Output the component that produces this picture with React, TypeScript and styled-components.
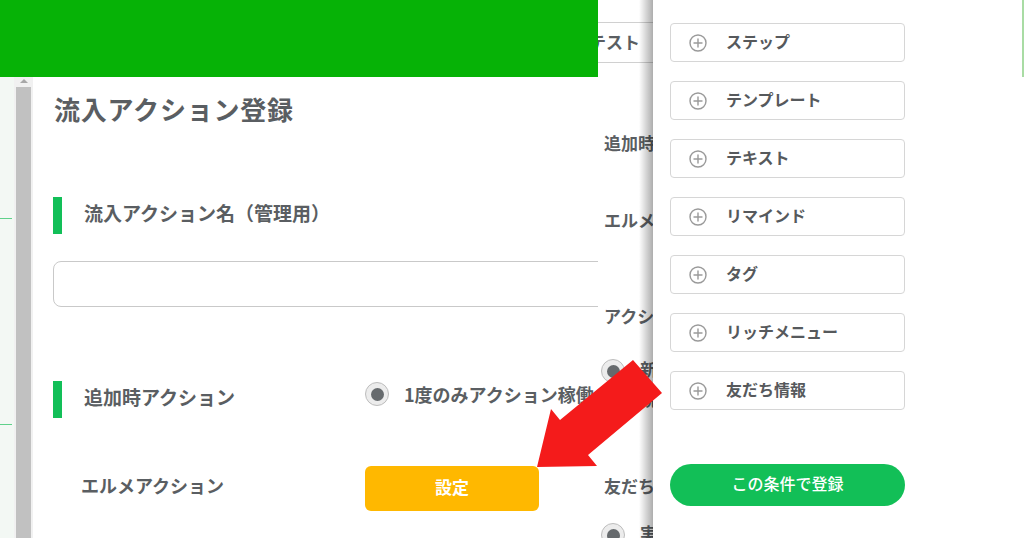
import styled, { createGlobalStyle } from 'styled-components';

const GlobalStyle = createGlobalStyle`
  html, body {
    margin: 0;
    padding: 0;
    background: #ffffff;
  }
  body {
    font-family: 'Noto Sans CJK JP', 'Noto Sans', sans-serif;
    color: #5a5e62;
  }
  * {
    box-sizing: border-box;
  }
`;

const Page = styled.div`
  position: relative;
  display: flex;
  width: 1024px;
  height: 538px;
  overflow: hidden;
  background: #ffffff;
`;

/* left screen */
const LeftPanel = styled.section`
  width: 598px;
  flex: none;
  display: flex;
  flex-direction: column;
  overflow: hidden;
`;

const Header = styled.header`
  height: 77px;
  flex: none;
  background: #06b206;
`;

const Body = styled.div`
  display: flex;
  flex: 1;
  min-height: 0;
`;

const Strip = styled.div`
  width: 14px;
  flex: none;
  display: flex;
  flex-direction: column;
  background: #f3f8f4;
`;

const StripTick = styled.div<{ $gap: number }>`
  margin-top: ${(p) => p.$gap}px;
  width: 12px;
  height: 1px;
  background: #5fd18a;
`;

const Scrollbar = styled.div`
  width: 19px;
  flex: none;
  display: flex;
  flex-direction: column;
  align-items: center;
  padding-top: 2px;
  background: #f1f1f1;
`;

const ScrollArrow = styled.div`
  width: 0;
  height: 0;
  border-left: 4px solid transparent;
  border-right: 4px solid transparent;
  border-bottom: 4px solid #a8a8a8;
`;

const ScrollThumb = styled.div`
  margin-top: 4px;
  width: 15px;
  flex: 1;
  background: #c1c1c1;
`;

const Content = styled.div`
  flex: 1;
  display: flex;
  flex-direction: column;
  padding: 15px 0 0 20px;
  min-width: 0;
`;

const Title = styled.h1`
  margin: 0 0 0 1px;
  font-size: 26px;
  line-height: 34px;
  font-weight: 700;
  letter-spacing: 0.8px;
  color: #5a5e62;
`;

const SectionHead = styled.div<{ $mt: number }>`
  margin-top: ${(p) => p.$mt}px;
  display: flex;
  align-items: center;
  height: 37px;
`;

const Bar = styled.span`
  width: 9px;
  height: 37px;
  flex: none;
  background: #12bf58;
`;

const SectionLabel = styled.h2`
  margin: 0 0 6px 22px;
  width: 281px;
  flex: none;
  font-size: 19px;
  line-height: 1;
  font-weight: 700;
  white-space: nowrap;
  color: #5a5e62;
`;

const RadioOption = styled.label`
  align-self: flex-start;
  margin-top: 1px;
  display: flex;
  align-items: center;
  gap: 15px;
  font-size: 18px;
  line-height: 1;
  font-weight: 700;
  white-space: nowrap;
`;

const Radio = styled.span`
  width: 24px;
  height: 24px;
  flex: none;
  display: flex;
  align-items: center;
  justify-content: center;
  border-radius: 50%;
  border: 1px solid #bdbdbd;
  background: #ececec;

  &::after {
    content: '';
    width: 13px;
    height: 13px;
    border-radius: 50%;
    background: #666a6d;
  }
`;

const NameInput = styled.input`
  margin-top: 27px;
  width: 600px;
  height: 46px;
  flex: none;
  border: 1px solid #c9c9c9;
  border-radius: 8px;
  background: #ffffff;
  outline: none;
`;

const FieldRow = styled.div`
  margin-top: 48px;
  display: flex;
  align-items: center;
  height: 45px;
`;

const FieldLabel = styled.span`
  width: 312px;
  flex: none;
  padding: 0 0 8px 28px;
  font-size: 18px;
  line-height: 1;
  font-weight: 700;
  white-space: nowrap;
`;

const SetButton = styled.button`
  width: 174px;
  height: 45px;
  padding: 0 0 4px;
  border: none;
  border-radius: 6px;
  background: #ffb800;
  color: #ffffff;
  font-family: inherit;
  font-size: 17px;
  font-weight: 700;
`;

/* middle screen, mostly hidden */
const MiddlePanel = styled.section`
  position: relative;
  width: 55px;
  flex: none;
  overflow: hidden;

  &::after {
    content: '';
    position: absolute;
    top: 0;
    right: 0;
    bottom: 0;
    width: 14px;
    background: linear-gradient(to right, rgba(0, 0, 0, 0), rgba(0, 0, 0, 0.32));
  }
`;

const MiddleInner = styled.div`
  margin-left: -9px;
  width: 220px;
  display: flex;
  flex-direction: column;
`;

const TestRow = styled.div`
  margin-top: 22px;
  height: 41px;
  display: flex;
  align-items: center;
  padding-bottom: 2px;
  border-top: 1px solid #d0d0d0;
  border-bottom: 1px solid #d0d0d0;
  font-size: 17px;
  font-weight: 700;
`;

const MiddleLabel = styled.div<{ $mt: number }>`
  margin-top: ${(p) => p.$mt}px;
  padding-left: 15px;
  font-size: 17px;
  line-height: 24px;
  font-weight: 700;
  white-space: nowrap;
`;

const MiddleOption = styled.div<{ $mt: number; $h: number }>`
  margin-top: ${(p) => p.$mt}px;
  height: ${(p) => p.$h}px;
  padding-left: 12px;
  display: flex;
  align-items: flex-start;
  gap: 15px;
  font-size: 17px;
  line-height: 30px;
  font-weight: 700;
`;

const WrapText = styled.span`
  width: 20px;
  margin-top: -5px;
`;

/* right screen */
const RightPanel = styled.section`
  flex: 1;
  display: flex;
  padding: 23px 0 0 17px;
`;

const Menu = styled.div`
  width: 235px;
  display: flex;
  flex-direction: column;
  gap: 19px;
`;

const MenuButton = styled.button`
  height: 39px;
  display: flex;
  align-items: center;
  gap: 19px;
  padding: 0 0 0 18px;
  border: 1px solid #d6d6d6;
  border-radius: 4px;
  background: #ffffff;
  color: #56595c;
  font-family: inherit;
  font-size: 16px;
  line-height: 1;
  font-weight: 700;
`;

const MenuText = styled.span`
  padding-bottom: 4px;
`;

const SubmitButton = styled.button`
  margin-top: 35px;
  height: 42px;
  padding: 0 0 4px;
  border: none;
  border-radius: 21px;
  background: #12bf57;
  color: #ffffff;
  font-family: inherit;
  font-size: 16px;
  font-weight: 500;
`;

const EdgeLine = styled.div`
  margin: -23px 0 0 auto;
  width: 2px;
  height: 77px;
  background: #a9dca4;
`;

const ArrowLayer = styled.svg`
  position: absolute;
  inset: 0;
  pointer-events: none;
`;

const PlusCircle = () => (
  <svg width='18' height='18' viewBox='0 0 18 18' fill='none'>
    <circle cx='9' cy='9' r='8' stroke='#9a9a9a' strokeWidth='1.4' />
    <path d='M9 5v8M5 9h8' stroke='#9a9a9a' strokeWidth='1.4' strokeLinecap='round' />
  </svg>
);

const menuItems = ['ステップ', 'テンプレート', 'テキスト', 'リマインド', 'タグ', 'リッチメニュー', '友だち情報'];

export default function App() {
  return (
    <Page>
      <GlobalStyle />
      <LeftPanel>
        <Header />
        <Body>
          <Strip>
            <StripTick $gap={141} />
            <StripTick $gap={205} />
          </Strip>
          <Scrollbar>
            <ScrollArrow />
            <ScrollThumb />
          </Scrollbar>
          <Content>
            <Title>流入アクション登録</Title>
            <SectionHead $mt={71}>
              <Bar />
              <SectionLabel>流入アクション名（管理用）</SectionLabel>
            </SectionHead>
            <NameInput type='text' />
            <SectionHead $mt={74}>
              <Bar />
              <SectionLabel>追加時アクション</SectionLabel>
              <RadioOption>
                <Radio />
                1度のみアクション稼働
              </RadioOption>
            </SectionHead>
            <FieldRow>
              <FieldLabel>エルメアクション</FieldLabel>
              <SetButton type='button'>設定</SetButton>
            </FieldRow>
          </Content>
        </Body>
      </LeftPanel>

      <MiddlePanel>
        <MiddleInner>
          <TestRow>テスト</TestRow>
          <MiddleLabel $mt={68}>追加時アクション</MiddleLabel>
          <MiddleLabel $mt={53}>エルメアクション</MiddleLabel>
          <MiddleLabel $mt={72}>アクション</MiddleLabel>
          <MiddleOption $mt={31} $h={60}>
            <Radio />
            <WrapText>新規</WrapText>
          </MiddleOption>
          <MiddleLabel $mt={55}>友だち</MiddleLabel>
          <MiddleOption $mt={25} $h={30}>
            <Radio />
            <WrapText>実</WrapText>
          </MiddleOption>
        </MiddleInner>
      </MiddlePanel>

      <RightPanel>
        <Menu>
          {menuItems.map((item) => (
            <MenuButton key={item} type='button'>
              <PlusCircle />
              <MenuText>{item}</MenuText>
            </MenuButton>
          ))}
          <SubmitButton type='button'>この条件で登録</SubmitButton>
        </Menu>
        <EdgeLine />
      </RightPanel>

      <ArrowLayer width='1024' height='538' viewBox='0 0 1024 538'>
        <polygon points='633,360 662,393 588,455 597,466 537,467 551,409 560,420' fill='#f41b1b' />
      </ArrowLayer>
    </Page>
  );
}
